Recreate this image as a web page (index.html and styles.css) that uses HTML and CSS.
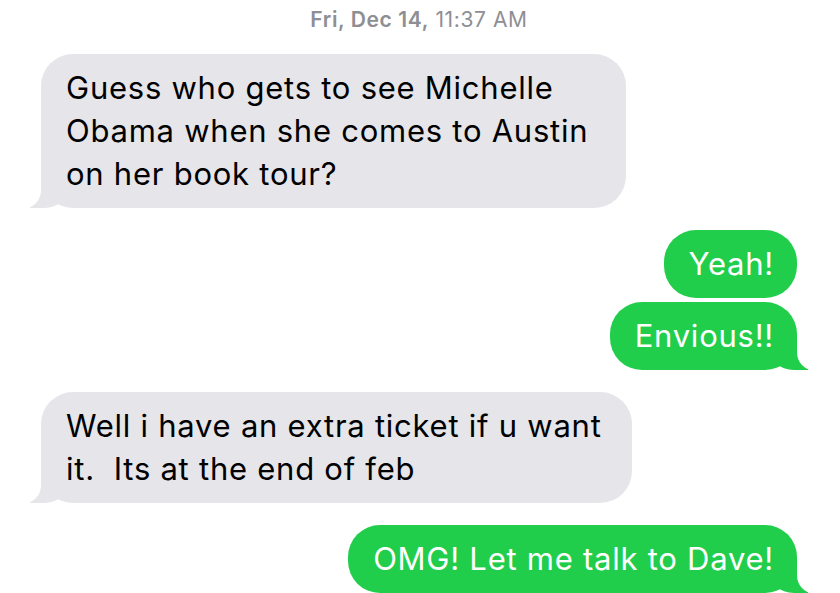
FILE: index.html
```html
<!DOCTYPE html>
<html lang="en">
<head>
<meta charset="utf-8">
<title>Messages</title>
<link rel="stylesheet" href="styles.css">
</head>
<body>
<main class="thread">
  <div class="stamp"><b>Fri, Dec 14,</b> 11:37 AM</div>
  <div class="group in">
    <div class="bubble tail w-a"><span class="text">Guess who gets to see Michelle<br>Obama when she comes to Austin<br>on her book tour?</span></div>
  </div>
  <div class="group out">
    <div class="bubble"><span class="text">Yeah!</span></div>
    <div class="bubble tail"><span class="text">Envious!!</span></div>
  </div>
  <div class="group in">
    <div class="bubble tail w-b"><span class="text">Well i have an extra ticket if u want<br>it.&nbsp; Its at the end of feb</span></div>
  </div>
  <div class="group out">
    <div class="bubble tail"><span class="text">OMG! Let me talk to Dave!</span></div>
  </div>
</main>
</body>
</html>
```
FILE: styles.css
```css
html, body {
  margin: 0;
  padding: 0;
  background: #ffffff;
}
body {
  font-family: "Inter", "Liberation Sans", sans-serif;
  overflow: hidden;
}
.thread {
  display: flex;
  flex-direction: column;
  gap: 22px;
  padding: 0 43px 0 41px;
}
.stamp {
  padding-top: 6px;
  height: 28px;
  line-height: 28px;
  margin-bottom: -2px;
  text-align: center;
  font-size: 21px;
  letter-spacing: 0.6px;
  color: #8e8e93;
  font-weight: 400;
}
.stamp b {
  font-weight: 600;
}
.group {
  display: flex;
  flex-direction: column;
  gap: 4px;
}
.group.in { align-items: flex-start; }
.group.out { align-items: flex-end; }
.bubble {
  position: relative;
  box-sizing: border-box;
  padding: 12px 23px 13px 25px;
  border-radius: 32px;
  font-size: 31px;
  line-height: 43px;
  letter-spacing: 0.75px;
  white-space: nowrap;
}
.text {
  position: relative;
  z-index: 2;
}
.in .bubble {
  background: #e5e5ea;
  color: #000000;
}
.out .bubble {
  background: #20ce4b;
  color: #ffffff;
}
.w-a { width: 585px; }
.w-b { width: 591px; }

/* tails */
.bubble.tail::before,
.bubble.tail::after {
  content: "";
  position: absolute;
  bottom: 0;
  height: 34px;
}
.in .bubble.tail::before {
  left: -11px;
  width: 40px;
  background: #e5e5ea;
  border-bottom-right-radius: 26px 22px;
  z-index: 0;
}
.in .bubble.tail::after {
  left: -40px;
  width: 40px;
  background: #ffffff;
  border-bottom-right-radius: 16px 18px;
  z-index: 1;
}
.out .bubble.tail::before {
  right: -11px;
  width: 40px;
  background: #20ce4b;
  border-bottom-left-radius: 26px 22px;
  z-index: 0;
}
.out .bubble.tail::after {
  right: -40px;
  width: 40px;
  background: #ffffff;
  border-bottom-left-radius: 16px 18px;
  z-index: 1;
}
```
